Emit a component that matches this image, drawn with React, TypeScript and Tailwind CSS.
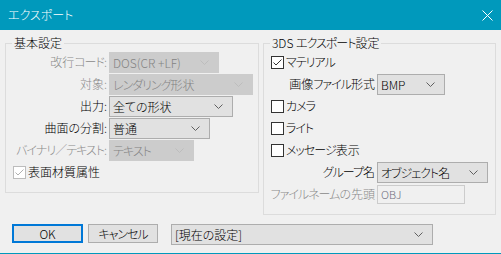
import React from "react";

// Narrow katakana runs to mimic the proportional kana of the original UI font
function kt(text: string): React.ReactNode {
  const parts = text.split(/([\u30A0-\u30FF\uFF0F]+)/);
  return parts.map((p, i) =>
    /[\u30A0-\u30FF\uFF0F]/.test(p) ? (
      <span key={i} className="tracking-[-1px]">
        {p}
      </span>
    ) : (
      <React.Fragment key={i}>{p}</React.Fragment>
    )
  );
}

function Chevron({ disabled }: { disabled?: boolean }) {
  return (
    <svg width="9" height="5" viewBox="0 0 9 5" className="shrink-0">
      <path d="M0.5 0.5 L4.5 4.5 L8.5 0.5" fill="none" stroke={disabled ? "#bdbdbd" : "#606060"} strokeWidth="1" />
    </svg>
  );
}

function Combo({ className, text, disabled }: { className: string; text: string; disabled?: boolean }) {
  return (
    <div
      className={
        "flex h-[21px] items-center justify-between border pl-[3px] pr-[9px] leading-[19px] " +
        (disabled ? "border-[#cccccc] bg-[#cccccc] text-[#838383] " : "border-[#adadad] bg-[#e1e1e1] text-black ") +
        className
      }
    >
      <span className="whitespace-nowrap">{kt(text)}</span>
      <Chevron disabled={disabled} />
    </div>
  );
}

function Check({ checked, disabled }: { checked?: boolean; disabled?: boolean }) {
  return (
    <span
      className={
        "flex h-[13px] w-[13px] shrink-0 items-center justify-center border bg-white " +
        (disabled ? "border-[#bcbcbc]" : "border-[#333333]")
      }
    >
      {checked && (
        <svg width="11" height="11" viewBox="0 0 11 11">
          <path d="M1.5 5.5 L4 8 L9.5 2.5" fill="none" stroke={disabled ? "#b0b0b0" : "#333333"} strokeWidth="1" />
        </svg>
      )}
    </span>
  );
}

function LRow({ label, disabled, children }: { label: string; disabled?: boolean; children: React.ReactNode }) {
  return (
    <div className="flex h-[22px] items-center gap-[2px]">
      <div className={"w-[101px] whitespace-nowrap text-right " + (disabled ? "text-[#8a8a8a]" : "text-black")}>{kt(label)}</div>
      {children}
    </div>
  );
}

function RRow({ label, disabled, children }: { label: string; disabled?: boolean; children: React.ReactNode }) {
  return (
    <div className="flex h-[22px] items-center gap-[2px]">
      <div className={"w-[111px] whitespace-nowrap text-right " + (disabled ? "text-[#8a8a8a]" : "text-black")}>{kt(label)}</div>
      {children}
    </div>
  );
}

function CRow({ label, checked }: { label: string; checked?: boolean }) {
  return (
    <div className="flex h-[22px] items-center gap-[2px] pl-[7px]">
      <Check checked={checked} />
      <span className="whitespace-nowrap">{kt(label)}</span>
    </div>
  );
}

export default function App() {
  return (
    <div className="flex h-[254px] w-[501px] flex-col overflow-hidden border-b border-[#0099bc] bg-[#f0f0f0] text-[12px] font-light leading-[16px] text-black [font-family:'Noto_Sans_CJK_JP','Noto_Sans',sans-serif] [font-feature-settings:'palt']">
      <div className="flex h-[30px] shrink-0 items-center justify-between bg-[#0099bc] pl-[8px] pr-[8px] text-white">
        <span>エクスポート</span>
        <svg width="11" height="11" viewBox="0 0 11 11">
          <path d="M0.5 0.5 L10.5 10.5 M10.5 0.5 L0.5 10.5" stroke="white" strokeWidth="1" />
        </svg>
      </div>

      <div className="mt-[5px] flex items-start gap-[4px] px-[5px]">
        <fieldset className="w-[255px] border border-[#dcdcdc] pb-[9px]">
          <legend className="ml-[6px] px-[2px] leading-[16px]">基本設定</legend>
          <LRow label="改行コード:" disabled>
            <Combo className="w-[110px]" text="DOS(CR +LF)" disabled />
          </LRow>
          <LRow label="対象:" disabled>
            <Combo className="w-[144px]" text="レンダリング形状" disabled />
          </LRow>
          <LRow label="出力:">
            <Combo className="w-[124px]" text="全ての形状" />
          </LRow>
          <LRow label="曲面の分割:">
            <Combo className="w-[101px]" text="普通" />
          </LRow>
          <LRow label="バイナリ／テキスト:" disabled>
            <Combo className="w-[85px]" text="テキスト" disabled />
          </LRow>
          <div className="flex h-[22px] items-center gap-[2px] pl-[7px]">
            <Check checked disabled />
            <span className="whitespace-nowrap">表面材質属性</span>
          </div>
        </fieldset>

        <fieldset className="w-[234px] border border-[#dcdcdc] pb-[9px]">
          <legend className="ml-[6px] px-[2px] leading-[16px]">{kt("3DS エクスポート設定")}</legend>
          <CRow label="マテリアル" checked />
          <RRow label="画像ファイル形式">
            <Combo className="w-[68px]" text="BMP" />
          </RRow>
          <CRow label="カメラ" />
          <CRow label="ライト" />
          <CRow label="メッセージ表示" />
          <RRow label="グループ名">
            <Combo className="w-[111px]" text="オブジェクト名" />
          </RRow>
          <RRow label="ファイルネームの先頭" disabled>
            <div className="flex h-[19px] w-[88px] items-center border border-[#cccccc] bg-[#f0f0f0] pl-[3px] text-[11px] text-[#6d6d7d]">
              OBJ
            </div>
          </RRow>
        </fieldset>
      </div>

      <div className="mt-[9px] flex items-start pl-[12px]">
        <button className="flex h-[19px] w-[71px] items-center justify-center border-2 border-[#0078d7] bg-[#e1e1e1] leading-[15px]">
          OK
        </button>
        <button className="ml-[5px] flex h-[19px] w-[70px] items-center justify-center border border-[#adadad] bg-[#e1e1e1] leading-[17px]">
          {kt("キャンセル")}
        </button>
        <Combo className="ml-[13px] w-[262px]" text="[現在の設定]" />
      </div>
    </div>
  );
}
